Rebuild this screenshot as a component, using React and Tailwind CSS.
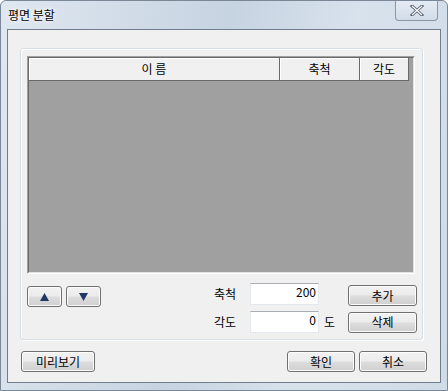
const font = { fontFamily: '"Noto Sans CJK KR", "Liberation Sans", sans-serif' };

function WinButton({ children, className = '' }) {
  return (
    <div
      className={`flex items-center justify-center rounded-[3px] border border-[#707070] bg-[linear-gradient(#f2f2f2_0%,#ebebeb_48%,#dddddd_52%,#cfcfcf_100%)] shadow-[inset_0_0_0_1px_#fcfcfc] text-[12px] text-black leading-none ${className}`}
    >
      {children}
    </div>
  );
}

function Arrow({ up }) {
  return (
    <svg width="9" height="8" viewBox="0 0 9 8">
      <path d={up ? 'M4.5 0 L9 8 L0 8 Z' : 'M0 0 L9 0 L4.5 8 Z'} fill="#1e3a64" />
    </svg>
  );
}

export default function App() {
  return (
    <div
      className="w-[448px] h-[391px] flex flex-col bg-[linear-gradient(100deg,#dfe7f0_0%,#c6d3e1_45%,#d8e2ed_70%,#cfdbe7_100%)] border border-[#7a8796] rounded-t-[6px] overflow-hidden"
      style={font}
    >
      {/* title bar */}
      <div className="h-[28px] flex items-start justify-between shrink-0">
        <div className="pl-[7px] pt-[7px] text-[12px] leading-[14px] text-black [text-shadow:0_0_6px_#ffffff,0_0_3px_#ffffff]">
          평면 분할
        </div>
        <div className="mr-[9px] w-[43px] h-[20px] rounded-b-[4px] border border-t-0 border-[#8896a6] bg-[linear-gradient(#e4ebf3,#d2dce8)] flex items-center justify-center">
          <svg width="14" height="11" viewBox="0 0 14 11">
            <path d="M2 1 L12 10 M12 1 L2 10" stroke="#5a6474" strokeWidth="3" strokeLinecap="square" />
            <path d="M2 1 L12 10 M12 1 L2 10" stroke="#ffffff" strokeWidth="1.2" />
          </svg>
        </div>
      </div>

      {/* client area */}
      <div className="mx-[6px] mb-[7px] flex-1 border border-[#6f7d8c] bg-[#f0f0f0] flex flex-col">
        {/* group box */}
        <div className="ml-[12px] mt-[18px] w-[403px] h-[292px] rounded-[3px] border border-[#d5dfe5] shadow-[inset_1px_1px_0_#ffffff,1px_1px_0_#ffffff] px-[6px] pt-[7px]">
          {/* list view */}
          <div className="w-[388px] h-[218px] border border-t-[#a0a0a0] border-l-[#a0a0a0] border-r-[#ffffff] border-b-[#ffffff]">
            <div className="w-full h-full border border-t-[#696969] border-l-[#696969] border-r-[#e3e3e3] border-b-[#e3e3e3] bg-[#a0a0a0] flex flex-col">
              <div className="flex h-[23px] text-[12px] text-black">
                <div className="w-[251px] flex items-center justify-center bg-[#f0f0f0] border-r border-b border-[#696969] shadow-[inset_1px_1px_0_#ffffff]">
                  이 름
                </div>
                <div className="w-[80px] flex items-center justify-center bg-[#f0f0f0] border-r border-b border-[#696969] shadow-[inset_1px_1px_0_#ffffff]">
                  축척
                </div>
                <div className="w-[49px] flex items-center justify-center bg-[#f0f0f0] border-r border-b border-[#696969] shadow-[inset_1px_1px_0_#ffffff]">
                  각도
                </div>
              </div>
            </div>
          </div>

          {/* controls */}
          <div className="flex items-start mt-[8px] text-[12px] text-black">
            <div className="flex gap-[4px] mt-[4px]">
              <WinButton className="w-[35px] h-[21px]">
                <Arrow up />
              </WinButton>
              <WinButton className="w-[35px] h-[21px]">
                <Arrow />
              </WinButton>
            </div>
            <div className="ml-[113px] flex flex-col gap-[5px]">
              <div className="flex items-center">
                <div className="w-[36px]">축척</div>
                <div className="w-[69px] h-[22px] bg-white border border-[#e3e9ef] border-t-[#abadb3] flex items-start justify-end pr-[2px] pt-[1px] text-[12px] leading-[14px]">
                  200
                </div>
                <div className="w-[29px]" />
                <WinButton className="w-[69px] h-[21px] mt-[3px]">추가</WinButton>
              </div>
              <div className="flex items-center">
                <div className="w-[36px]">각도</div>
                <div className="w-[69px] h-[22px] bg-white border border-[#e3e9ef] border-t-[#abadb3] flex items-start justify-end pr-[2px] pt-[1px] text-[12px] leading-[14px]">
                  0
                </div>
                <div className="w-[29px] pl-[5px]">도</div>
                <WinButton className="w-[69px] h-[21px]">삭제</WinButton>
              </div>
            </div>
          </div>
        </div>

        {/* bottom buttons */}
        <div className="flex justify-between mt-[11px] pl-[13px] pr-[13px]">
          <WinButton className="w-[74px] h-[21px]">미리보기</WinButton>
          <div className="flex gap-[4px]">
            <WinButton className="w-[68px] h-[21px]">확인</WinButton>
            <WinButton className="w-[68px] h-[21px]">취소</WinButton>
          </div>
        </div>
      </div>
    </div>
  );
}
